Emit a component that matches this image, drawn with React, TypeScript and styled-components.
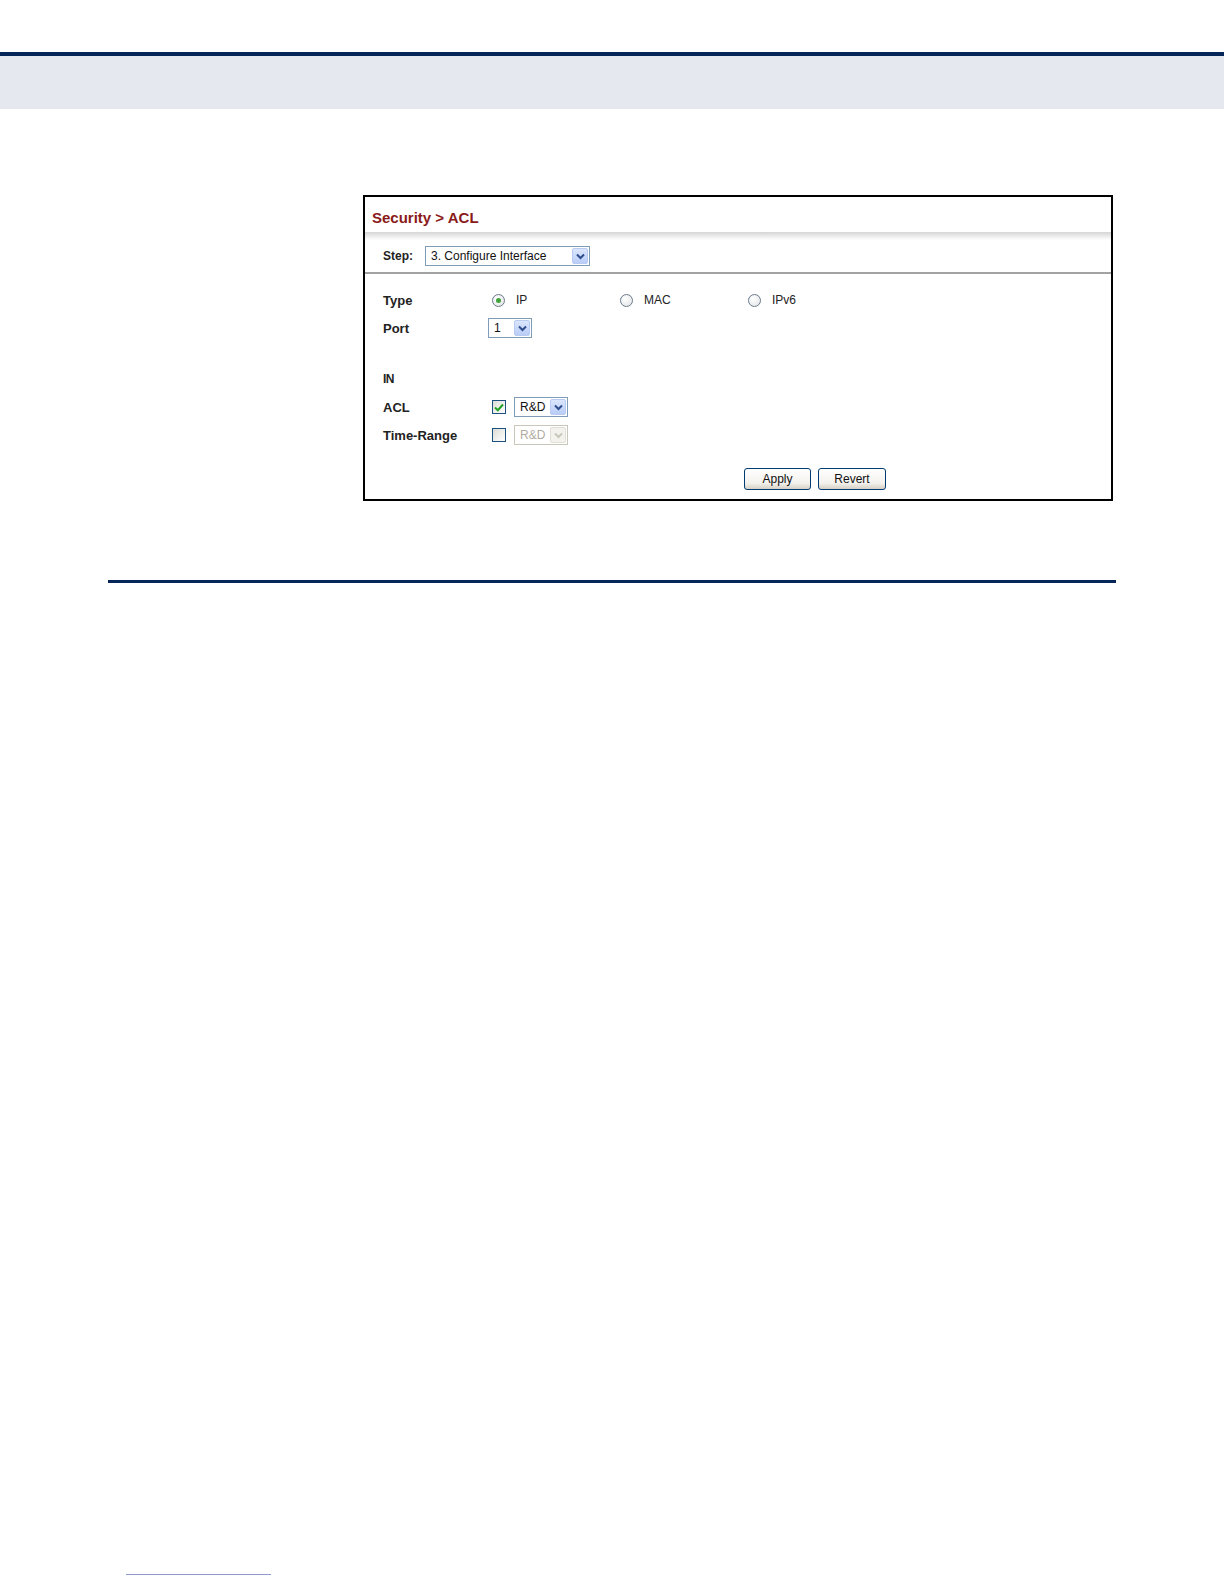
import React from "react";
import styled, { createGlobalStyle } from "styled-components";

const GlobalStyle = createGlobalStyle`
  body {
    margin: 0;
    background: #fff;
    font-family: "Liberation Sans", Arial, sans-serif;
  }
`;

const Page = styled.div`
  width: 1224px;
  min-height: 1584px;
  display: flex;
  flex-direction: column;
`;

const TopRule = styled.div`
  margin-top: 52px;
  height: 4px;
  background: #06265a;
`;

const HeaderBand = styled.div`
  height: 53px;
  background: #e6e8ef;
`;

const FigureArea = styled.div`
  padding: 86px 0 0 363px;
`;

const Panel = styled.div`
  box-sizing: border-box;
  width: 750px;
  height: 306px;
  border: 2px solid #000;
  background: #fff;
  display: flex;
  flex-direction: column;
`;

const TitleBar = styled.div`
  height: 35px;
  box-sizing: border-box;
  padding: 12px 7px 0;
  font-size: 15px;
  line-height: 17px;
  font-weight: bold;
  color: #8a1a1a;
`;

const TitleShade = styled.div`
  height: 8px;
  background: linear-gradient(#d6d6d6, #fff);
`;

const StepRow = styled.div`
  height: 32px;
  display: flex;
  align-items: center;
  gap: 12px;
  padding-left: 18px;
  border-bottom: 2px solid #a3a3a3;
`;

const StepLabel = styled.span`
  font-size: 12px;
  font-weight: bold;
  color: #222;
`;

const FormGrid = styled.div`
  display: grid;
  grid-template-columns: 105px 1fr;
  grid-template-rows: 28px 28px 51px 28px 28px;
  align-items: center;
  padding: 12px 0 0 18px;
`;

const FieldLabel = styled.div`
  font-size: 13px;
  font-weight: bold;
  color: #222;
`;

const SectionLabel = styled(FieldLabel)`
  grid-column: 1 / span 2;
  align-self: end;
  height: 28px;
  line-height: 28px;
  font-size: 12px;
  letter-spacing: -0.5px;
`;

const Controls = styled.div<{ $gap?: number }>`
  display: flex;
  align-items: center;
  gap: ${(p) => p.$gap ?? 0}px;
`;

const RadioOption = styled.label`
  width: 128px;
  display: flex;
  align-items: center;
  gap: 11px;
  padding-left: 4px;
  box-sizing: border-box;
  font-size: 12px;
  color: #222;
`;

const RadioCircle = styled.span<{ $checked?: boolean }>`
  width: 13px;
  height: 13px;
  border-radius: 50%;
  border: 1px solid #6b7a8a;
  background: radial-gradient(circle at 40% 35%, #fff, #dfe2e6);
  box-sizing: border-box;
  display: flex;
  align-items: center;
  justify-content: center;
  &::after {
    content: "";
    display: ${(p) => (p.$checked ? "block" : "none")};
    width: 5px;
    height: 5px;
    border-radius: 50%;
    background: #3fa33a;
  }
`;

const SelectBox = styled.div<{ $width: number; $disabled?: boolean }>`
  width: ${(p) => p.$width}px;
  height: 20px;
  box-sizing: border-box;
  border: 1px solid ${(p) => (p.$disabled ? "#c9c7ba" : "#7f9db9")};
  background: #fff;
  display: flex;
  align-items: center;
  justify-content: space-between;
  padding: 1px;
  font-size: 12px;
  color: ${(p) => (p.$disabled ? "#b0ad9f" : "#111")};
`;

const SelectText = styled.span`
  padding-left: 4px;
`;

const ArrowButton = styled.span<{ $disabled?: boolean }>`
  width: 16px;
  height: 16px;
  box-sizing: border-box;
  border-radius: 2px;
  border: 1px solid ${(p) => (p.$disabled ? "#e2e0d6" : "#b8cbf3")};
  background: ${(p) =>
    p.$disabled ? "#f3f2ec" : "linear-gradient(#dbe6fd, #b9cdf7)"};
  display: flex;
  align-items: center;
  justify-content: center;
`;

const CheckBox = styled.span`
  width: 14px;
  height: 14px;
  margin-left: 4px;
  box-sizing: border-box;
  border: 1px solid #1c5180;
  background: linear-gradient(135deg, #dcdcd6, #fff);
  display: flex;
  align-items: center;
  justify-content: center;
`;

const ButtonRow = styled.div`
  display: flex;
  gap: 7px;
  padding: 19px 0 0 379px;
`;

const Button = styled.button<{ $width: number }>`
  width: ${(p) => p.$width}px;
  height: 22px;
  border: 1px solid #003c74;
  border-radius: 3px;
  background: linear-gradient(#fff, #f3f2ed 70%, #d6d0c5);
  font-family: "Liberation Sans", Arial, sans-serif;
  font-size: 12px;
  color: #111;
  padding: 0;
`;

const Divider = styled.div`
  margin: 79px 0 0 108px;
  width: 1008px;
  height: 3px;
  background: #06265a;
`;

const FootRule = styled.div`
  margin: 991px 0 0 126px;
  width: 145px;
  height: 1px;
  background: #8f9bcc;
`;

function Chevron({ disabled }: { disabled?: boolean }) {
  return (
    <svg width="9" height="7" viewBox="0 0 9 7">
      <path
        d="M1 1.5 L4.5 5 L8 1.5"
        fill="none"
        stroke={disabled ? "#c9c7bc" : "#2d4d8c"}
        strokeWidth="2"
      />
    </svg>
  );
}

function Select({
  value,
  width,
  disabled,
}: {
  value: string;
  width: number;
  disabled?: boolean;
}) {
  return (
    <SelectBox $width={width} $disabled={disabled}>
      <SelectText>{value}</SelectText>
      <ArrowButton $disabled={disabled}>
        <Chevron disabled={disabled} />
      </ArrowButton>
    </SelectBox>
  );
}

function Check({ checked }: { checked?: boolean }) {
  return (
    <CheckBox>
      {checked && (
        <svg width="10" height="9" viewBox="0 0 10 9">
          <path
            d="M1 4.5 L3.8 7.2 L9 1.5"
            fill="none"
            stroke="#21a121"
            strokeWidth="2"
          />
        </svg>
      )}
    </CheckBox>
  );
}

const typeOptions = [
  { label: "IP", checked: true },
  { label: "MAC", checked: false },
  { label: "IPv6", checked: false },
];

export default function App() {
  return (
    <Page>
      <GlobalStyle />
      <TopRule />
      <HeaderBand />
      <FigureArea>
        <Panel>
          <TitleBar>Security &gt; ACL</TitleBar>
          <TitleShade />
          <StepRow>
            <StepLabel>Step:</StepLabel>
            <Select value="3. Configure Interface" width={165} />
          </StepRow>
          <FormGrid>
            <FieldLabel>Type</FieldLabel>
            <Controls>
              {typeOptions.map((opt) => (
                <RadioOption key={opt.label}>
                  <RadioCircle $checked={opt.checked} />
                  {opt.label}
                </RadioOption>
              ))}
            </Controls>

            <FieldLabel>Port</FieldLabel>
            <Controls>
              <Select value="1" width={44} />
            </Controls>

            <SectionLabel>IN</SectionLabel>

            <FieldLabel>ACL</FieldLabel>
            <Controls $gap={8}>
              <Check checked />
              <Select value="R&D" width={54} />
            </Controls>

            <FieldLabel>Time-Range</FieldLabel>
            <Controls $gap={8}>
              <Check />
              <Select value="R&D" width={54} disabled />
            </Controls>
          </FormGrid>
          <ButtonRow>
            <Button $width={67}>Apply</Button>
            <Button $width={68}>Revert</Button>
          </ButtonRow>
        </Panel>
      </FigureArea>
      <Divider />
      <FootRule />
    </Page>
  );
}
